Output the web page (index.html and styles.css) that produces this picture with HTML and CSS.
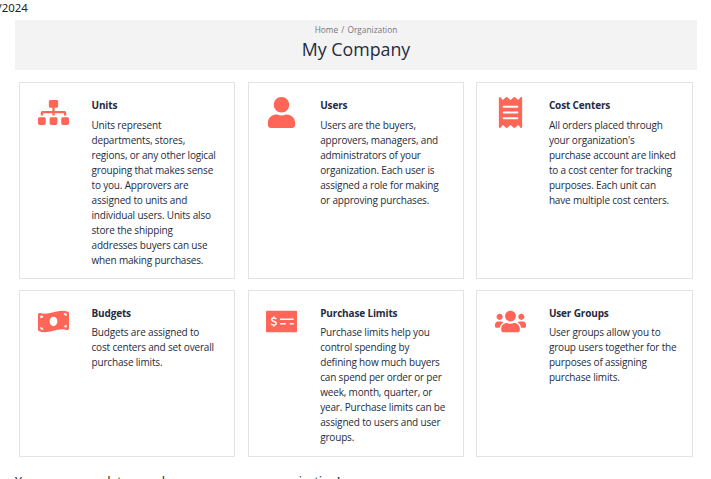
FILE: index.html
```html
<!DOCTYPE html>
<html lang="en">
<head>
<meta charset="utf-8">
<title>My Company</title>
<link rel="stylesheet" href="styles.css">
</head>
<body>
<p class="date">/2024</p>
<header class="banner">
  <nav class="crumbs">Home / Organization</nav>
  <h1>My Company</h1>
</header>
<main class="cards">
  <article class="card">
    <svg class="icon" viewBox="0 0 640 512"><path d="M128 352H32c-17.700 0-32 14.300-32 32v96c0 17.700 14.300 32 32 32h96c17.700 0 32-14.300 32-32v-96c0-17.700-14.300-32-32-32zm-24-80h192v48h48v-48h192v48h48v-57.600c0-21.200-17.200-38.400-38.400-38.400H344v-64h40c17.700 0 32-14.300 32-32V32c0-17.700-14.300-32-32-32H256c-17.700 0-32 14.300-32 32v96c0 17.700 14.300 32 32 32h40v64H94.400C73.200 224 56 241.200 56 262.400V320h48v-48zm264 80h-96c-17.700 0-32 14.300-32 32v96c0 17.700 14.300 32 32 32h96c17.700 0 32-14.300 32-32v-96c0-17.700-14.300-32-32-32zm240 0h-96c-17.700 0-32 14.300-32 32v96c0 17.700 14.300 32 32 32h96c17.700 0 32-14.300 32-32v-96c0-17.700-14.300-32-32-32z"/></svg>
    <div class="copy"><h2>Units</h2>
    <p>Units represent<br>departments, stores,<br>regions, or any other logical<br>grouping that makes sense<br>to you. Approvers are<br>assigned to units and<br>individual users. Units also<br>store the shipping<br>addresses buyers can use<br>when making purchases.</p></div>
  </article>
  <article class="card">
    <svg class="icon" viewBox="0 0 448 512"><path d="M224 256c70.700 0 128-57.300 128-128S294.700 0 224 0 96 57.300 96 128s57.300 128 128 128zm89.600 32h-16.700c-22.200 10.200-46.900 16-72.900 16s-50.600-5.800-72.900-16h-16.700C60.200 288 0 348.200 0 422.400V464c0 26.500 21.500 48 48 48h352c26.500 0 48-21.500 48-48v-41.600c0-74.200-60.200-134.400-134.400-134.400z"/></svg>
    <div class="copy"><h2>Users</h2>
    <p>Users are the buyers,<br>approvers, managers, and<br>administrators of your<br>organization. Each user is<br>assigned a role for making<br>or approving purchases.</p></div>
  </article>
  <article class="card">
    <svg class="icon" viewBox="0 0 384 512"><path d="M358.400 3.200L320 48 265.600 3.200a15.900 15.900 0 0 0-19.200 0L192 48 137.600 3.200a15.900 15.900 0 0 0-19.200 0L64 48 25.600 3.200C15-4.700 0 2.800 0 16v480c0 13.200 15 20.700 25.600 12.800L64 464l54.400 44.800a15.900 15.900 0 0 0 19.200 0L192 464l54.400 44.800a15.900 15.900 0 0 0 19.200 0L320 464l38.400 44.800c10.500 7.900 25.600.4 25.600-12.800V16c0-13.200-15-20.700-25.600-12.800zM320 360c0 4.400-3.600 8-8 8H72c-4.400 0-8-3.600-8-8v-16c0-4.400 3.600-8 8-8h240c4.400 0 8 3.600 8 8v16zm0-96c0 4.400-3.600 8-8 8H72c-4.400 0-8-3.600-8-8v-16c0-4.400 3.600-8 8-8h240c4.400 0 8 3.600 8 8v16zm0-96c0 4.400-3.600 8-8 8H72c-4.400 0-8-3.600-8-8v-16c0-4.400 3.600-8 8-8h240c4.400 0 8 3.600 8 8v16z"/></svg>
    <div class="copy"><h2>Cost Centers</h2>
    <p>All orders placed through<br>your organization's<br>purchase account are linked<br>to a cost center for tracking<br>purposes. Each unit can<br>have multiple cost centers.</p></div>
  </article>
  <article class="card compact">
    <svg class="icon" viewBox="0 0 640 512"><path d="M621.200 54.500C582.400 38.200 543.600 32 504.800 32c-123.200 0-246.300 62.300-369.500 62.300-30.900 0-61.800-3.900-92.700-13.700-3.500-1.100-7-1.600-10.300-1.600C15 79 0 92.300 0 110.800v317.300c0 12.600 7.200 24.600 18.800 29.500C57.600 473.800 96.400 480 135.200 480c123.200 0 246.400-62.300 369.500-62.300 30.900 0 61.800 3.900 92.700 13.700 3.500 1.100 7 1.600 10.300 1.600 17.300 0 32.300-13.300 32.300-31.800V83.900c0-12.600-7.200-24.600-18.800-29.400zM48 132.200c20.100 5 41.100 7.800 62.700 8.900-5.300 26.800-28.200 47.100-62.700 47.900v-56.800zm0 285v-47.800c34.300 0 62.400 25.800 63.800 59.700-22.100-1.800-43.100-5.600-63.800-11.900zM320 352c-44.200 0-80-43-80-96s35.800-96 80-96 80 43 80 96-35.800 96-80 96zm272 27.800c-17.500-4.400-35.700-7.100-54.500-8.400 4.500-27 27-48 54.500-50.400v58.800zm0-236.300c-33.300-1.300-60.300-27.900-61.500-61 21 1.900 41.300 6 61.500 12.300v48.700z"/></svg>
    <div class="copy"><h2>Budgets</h2>
    <p>Budgets are assigned to<br>cost centers and set overall<br>purchase limits.</p></div>
  </article>
  <article class="card compact">
    <svg class="icon" viewBox="0 0 640 512"><rect y="32" width="640" height="448" rx="20"/><g class="cut"><path d="M290 208h282M290 304h118M490 304h82"/><path d="M212 208c-10-20-28-24-46-24-30 0-48 14-48 34 0 48 94 28 94 76 0 22-20 36-50 36-24 0-44-8-54-28M164 150v34M164 330v34"/></g></svg>
    <div class="copy"><h2>Purchase Limits</h2>
    <p>Purchase limits help you<br>control spending by<br>defining how much buyers<br>can spend per order or per<br>week, month, quarter, or<br>year. Purchase limits can be<br>assigned to users and user<br>groups.</p></div>
  </article>
  <article class="card compact">
    <svg class="icon" viewBox="0 0 640 512"><path d="M96 224c35.300 0 64-28.700 64-64s-28.700-64-64-64-64 28.700-64 64 28.700 64 64 64zm448 0c35.300 0 64-28.700 64-64s-28.700-64-64-64-64 28.700-64 64 28.700 64 64 64zm32 32h-64c-17.600 0-33.500 7.100-45.100 18.600 40.300 22.100 68.900 62 75.100 109.400h66c17.700 0 32-14.300 32-32v-32c0-35.300-28.700-64-64-64zm-256 0c61.900 0 112-50.100 112-112S381.900 32 320 32 208 82.100 208 144s50.100 112 112 112zm76.800 32h-8.300c-20.800 10-43.900 16-68.500 16s-47.600-6-68.500-16h-8.300C179.600 288 128 339.600 128 403.200V432c0 26.500 21.500 48 48 48h288c26.500 0 48-21.500 48-48v-28.800c0-63.600-51.600-115.200-115.200-115.200zm-223.700-13.400C161.500 263.100 145.600 256 128 256H64c-35.300 0-64 28.700-64 64v32c0 17.700 14.300 32 32 32h65.900c6.300-47.400 34.900-87.300 75.200-109.400z"/></svg>
    <div class="copy"><h2>User Groups</h2>
    <p>User groups allow you to<br>group users together for the<br>purposes of assigning<br>purchase limits.</p></div>
  </article>
</main>
<p class="note">You can access data saved across your own organization!</p>
</body>
</html>
```

FILE: styles.css
```css
* { box-sizing: border-box; }
body { margin: 0; height: 479px; overflow: hidden; background: #fff; color: #252b40; font-family: "Open Sans", "Noto Sans", sans-serif; }
h1, h2, p { margin: 0; }
.date { height: 20px; margin-left: -2.500px; font-family: "Noto Sans", sans-serif; font-size: 11.400px; line-height: 16px; color: #222; }
.banner { height: 50px; margin: 0 14px 0 15px; padding-top: 3px; background: #f3f3f3; text-align: center; }
.crumbs { font-size: 8.300px; line-height: 14px; color: #737582; word-spacing: 1px; }
h1 { font-size: 17.800px; font-weight: 400; line-height: 25px; }
.cards { display: grid; grid-template-columns: repeat(3, 216.200px); grid-template-rows: 196.500px 167px; gap: 11.500px 12.500px; margin: 12px 0 0 19px; }
.card { display: flex; border: 1px solid #e2e2e7; padding: 14.300px 0 0 17.500px; }
.icon { flex: none; width: 31px; height: 31px; fill: #ff6658; }
.compact .icon { margin-top: 0.600px; }
.cut path { fill: none; stroke: #fff; stroke-width: 29px; }
.copy { margin: 1px 0 0 23px; white-space: nowrap; }
h2 { font-size: 10px; font-weight: 700; line-height: 15px; letter-spacing: -0.150px; }
.copy p { margin-top: 5px; font-size: 10px; line-height: 15px; letter-spacing: -0.170px; }
.compact .copy p { margin-top: 4px; }
.note { margin: 16px 0 0 15px; font-family: "Noto Sans", sans-serif; font-size: 12.200px; line-height: 18px; color: #222; white-space: nowrap; }
```
